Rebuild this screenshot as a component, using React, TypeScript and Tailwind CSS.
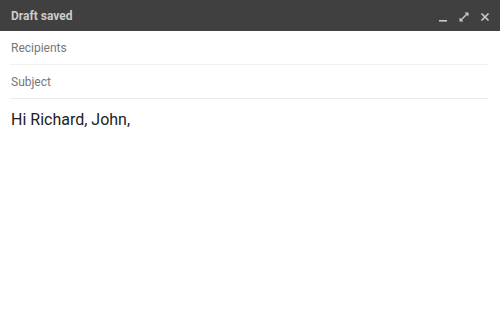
export default function App() {
  return (
    <div className="flex h-[318px] w-[500px] flex-col bg-white font-['Roboto',sans-serif]">
      {/* Header */}
      <div className="flex h-[31px] items-center justify-between bg-[#404040] pl-[11px] pr-[9px]">
        <span className="text-[12px] font-bold text-[#cccccc]">Draft saved</span>
        <div className="flex items-center gap-[9px] pt-[2px] text-[#c8c8c8]">
          <svg width="12" height="12" viewBox="0 0 12 12">
            <rect x="2" y="9" width="8" height="1.6" fill="currentColor" />
          </svg>
          <svg width="12" height="12" viewBox="0 0 12 12" fill="none" stroke="currentColor" strokeWidth="1.5">
            <path d="M3 9 L9 3" />
            <path d="M1.5 6.5 V10.5 H5.5 Z" fill="currentColor" stroke="none" />
            <path d="M6.5 1.5 H10.5 V5.5 Z" fill="currentColor" stroke="none" />
          </svg>
          <svg width="12" height="12" viewBox="0 0 12 12" fill="none" stroke="currentColor" strokeWidth="1.7">
            <path d="M2.5 2.5 L9.5 9.5 M9.5 2.5 L2.5 9.5" />
          </svg>
        </div>
      </div>

      {/* Fields */}
      <div className="px-[10px] pr-[12px]">
        <div className="flex h-[34px] items-center border-b border-[#f1f1f1] pl-px pt-[1px] text-[12px] text-[#777]">
          Recipients
        </div>
        <div className="flex h-[34px] items-center border-b border-[#ebebeb] pl-px pt-[1px] text-[12px] text-[#777]">
          Subject
        </div>
        <div className="pl-px pt-[9px] text-[16px] text-[#222]">Hi Richard, John,</div>
      </div>
    </div>
  );
}
